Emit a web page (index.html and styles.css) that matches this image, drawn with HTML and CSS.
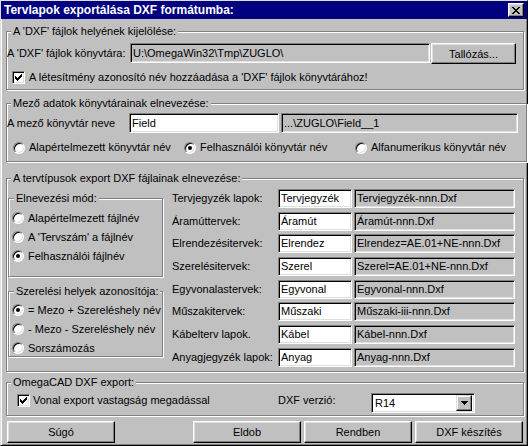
FILE: index.html
```html
<!DOCTYPE html>
<html lang="hu">
<head>
    <meta charset="UTF-8">
    <meta name="viewport" content="width=device-width, initial-scale=1.0">
    <title>Tervlapok exportálása DXF formátumba</title>
    <link rel="stylesheet" href="styles.css">
</head>
<body>

<div class="window">

    <!-- Title bar -->
    <div class="titlebar">
        <span class="title">Tervlapok exportálása DXF formátumba:</span>
        <span class="close-btn">
            <svg width="8" height="7" viewBox="0 0 8 7" shape-rendering="crispEdges"><path d="M0 0h2v1h-2zM6 0h2v1h-2zM1 1h2v1h-2zM5 1h2v1h-2zM2 2h4v1h-4zM3 3h2v1h-2zM2 4h4v1h-4zM1 5h2v1h-2zM5 5h2v1h-2zM0 6h2v1h-2zM6 6h2v1h-2z" fill="#000"/></svg>
        </span>
    </div>

    <div class="dialog">

        <!-- DXF directory -->
        <fieldset class="group dir-group">
            <legend>A 'DXF' fájlok helyének kijelölése:</legend>
            <div class="dir-body">
                <div class="row">
                    <span class="lbl row-lbl">A 'DXF' fájlok könyvtára:</span>
                    <span class="field ro dir-path">U:\OmegaWin32\Tmp\ZUGLO\</span>
                    <button class="btn browse">Tallózás...</button>
                </div>
                <div class="opt add-id">
                    <span class="check"><svg width="7" height="7" viewBox="0 0 7 7" shape-rendering="crispEdges"><path d="M6 0h1v1h-1zM5 1h2v1h-2zM0 2h1v1h-1zM4 2h3v1h-3zM0 3h2v1h-2zM3 3h3v1h-3zM0 4h5v1h-5zM1 5h3v1h-3zM2 6h1v1h-1z" fill="#000"/></svg></span>
                    A létesítmény azonosító név hozzáadása a 'DXF' fájlok könyvtárához!
                </div>
            </div>
        </fieldset>

        <!-- Field directories -->
        <fieldset class="group field-group">
            <legend>Mező adatok könyvtárainak elnevezése:</legend>
            <div class="field-body">
                <div class="row">
                    <span class="lbl row-lbl">A mező könyvtár neve</span>
                    <span class="field name-input">Field</span>
                    <span class="field ro name-preview">...\ZUGLO\Field__1</span>
                </div>
                <div class="radio-row">
                    <span class="opt"><span class="radio"></span>Alapértelmezett könyvtár név</span>
                    <span class="opt"><span class="radio on"></span>Felhasználói könyvtár név</span>
                    <span class="opt"><span class="radio"></span>Alfanumerikus könyvtár név</span>
                </div>
            </div>
        </fieldset>

        <!-- Plan type file names -->
        <fieldset class="group types-group">
            <legend>A tervtípusok export DXF fájlainak elnevezése:</legend>
            <div class="types-body">
                <div class="modes">
                    <fieldset class="group sub mode-group">
                        <legend>Elnevezési mód:</legend>
                        <div class="radio-list">
                            <span class="opt"><span class="radio"></span>Alapértelmezett fájlnév</span>
                            <span class="opt"><span class="radio"></span>A 'Tervszám' a fájlnév</span>
                            <span class="opt"><span class="radio on"></span>Felhasználói fájlnév</span>
                        </div>
                    </fieldset>
                    <fieldset class="group sub place-group">
                        <legend>Szerelési helyek azonosítója:</legend>
                        <div class="radio-list">
                            <span class="opt"><span class="radio on"></span>= Mezo + Szereléshely név</span>
                            <span class="opt"><span class="radio"></span>- Mezo - Szereléshely név</span>
                            <span class="opt"><span class="radio"></span>Sorszámozás</span>
                        </div>
                    </fieldset>
                </div>
                <div class="names">
                    <span class="lbl">Tervjegyzék lapok:</span>
                    <span class="field">Tervjegyzék</span>
                    <span class="field ro">Tervjegyzék-nnn.Dxf</span>

                    <span class="lbl">Áramúttervek:</span>
                    <span class="field">Áramút</span>
                    <span class="field ro">Áramút-nnn.Dxf</span>

                    <span class="lbl">Elrendezésitervek:</span>
                    <span class="field">Elrendez</span>
                    <span class="field ro">Elrendez=AE.01+NE-nnn.Dxf</span>

                    <span class="lbl">Szerelésitervek:</span>
                    <span class="field">Szerel</span>
                    <span class="field ro">Szerel=AE.01+NE-nnn.Dxf</span>

                    <span class="lbl">Egyvonalastervek:</span>
                    <span class="field">Egyvonal</span>
                    <span class="field ro">Egyvonal-nnn.Dxf</span>

                    <span class="lbl">Műszakitervek:</span>
                    <span class="field">Műszaki</span>
                    <span class="field ro">Műszaki-iii-nnn.Dxf</span>

                    <span class="lbl">Kábelterv lapok.</span>
                    <span class="field">Kábel</span>
                    <span class="field ro">Kábel-nnn.Dxf</span>

                    <span class="lbl">Anyagjegyzék lapok:</span>
                    <span class="field">Anyag</span>
                    <span class="field ro">Anyag-nnn.Dxf</span>
                </div>
            </div>
        </fieldset>

        <!-- OmegaCAD export -->
        <fieldset class="group omega-group">
            <legend>OmegaCAD DXF export:</legend>
            <div class="omega-body">
                <span class="opt line-width">
                    <span class="check"><svg width="7" height="7" viewBox="0 0 7 7" shape-rendering="crispEdges"><path d="M6 0h1v1h-1zM5 1h2v1h-2zM0 2h1v1h-1zM4 2h3v1h-3zM0 3h2v1h-2zM3 3h3v1h-3zM0 4h5v1h-5zM1 5h3v1h-3zM2 6h1v1h-1z" fill="#000"/></svg></span>
                    Vonal export vastagság megadással
                </span>
                <span class="lbl version-lbl">DXF verzió:</span>
                <span class="field select">
                    R14
                    <span class="drop-btn"><svg width="7" height="4" viewBox="0 0 7 4" shape-rendering="crispEdges"><path d="M0 0h7v1h-7zM1 1h5v1h-5zM2 2h3v1h-3zM3 3h1v1h-1z" fill="#000"/></svg></span>
                </span>
            </div>
        </fieldset>

        <!-- Dialog buttons -->
        <div class="buttons">
            <button class="btn help">Súgó</button>
            <button class="btn">Eldob</button>
            <button class="btn">Rendben</button>
            <button class="btn">DXF készítés</button>
        </div>

    </div>
</div>

</body>
</html>
```

FILE: styles.css
```css
* {
    box-sizing: border-box;
}
body {
    margin: 0;
    background: #c0c0c0;
    font-family: "Liberation Sans", Arial, sans-serif;
    font-size: 11px;
    color: #000;
}
.window {
    width: 528px;
    height: 446px;
    border: 1px solid;
    border-color: #dfdfdf #000 #000 #dfdfdf;
    box-shadow: inset 1px 1px #fff, inset -1px -1px #808080;
    background: #c0c0c0;
}

/* title bar */
.titlebar {
    height: 18px;
    background: #000080;
    display: flex;
    align-items: center;
    justify-content: space-between;
    padding: 0 3px 0 3px;
}
.title {
    color: #fff;
    font-weight: bold;
    font-size: 12px;
}
.close-btn {
    width: 16px;
    height: 14px;
    background: #c0c0c0;
    border: 1px solid;
    border-color: #fff #000 #000 #fff;
    box-shadow: inset -1px -1px #808080, inset 1px 1px #dfdfdf;
    display: flex;
    align-items: center;
    justify-content: center;
}

.dialog {
    padding: 6px 3px 0 5px;
}

/* group boxes */
.group {
    margin: 0;
    padding: 0;
    border: 1px solid #808080;
    box-shadow: 1px 1px 0 #fff, inset 1px 1px 0 #fff;
}
.group legend {
    margin-left: 4px;
    padding: 0 2px;
    line-height: 13px;
    background: #c0c0c0;
}
.group.sub legend {
    margin-left: 5px;
}

.row {
    display: flex;
    align-items: flex-start;
}
.lbl {
    line-height: 20px;
    white-space: nowrap;
}
.row-lbl {
    width: 123px;
}
.row .field {
    line-height: 18px;
}

/* sunken edit fields */
.field {
    display: block;
    height: 20px;
    border: 1px solid;
    border-color: #808080 #fff #fff #808080;
    box-shadow: inset 1px 1px #000, inset -1px -1px #dfdfdf;
    background: #fff;
    padding: 0 2px;
    line-height: 18px;
    white-space: nowrap;
    overflow: hidden;
}
.field.ro {
    background: #c0c0c0;
}

/* raised buttons */
.btn {
    font: inherit;
    color: #000;
    background: #c0c0c0;
    border: 1px solid;
    border-color: #fff #000 #000 #fff;
    box-shadow: inset -1px -1px #808080, inset 1px 1px #dfdfdf;
    padding: 0;
}

/* check boxes and radio buttons */
.opt {
    display: flex;
    align-items: center;
    white-space: nowrap;
    line-height: 13px;
}
.check {
    width: 13px;
    height: 13px;
    flex: none;
    background: #fff;
    border: 1px solid;
    border-color: #808080 #fff #fff #808080;
    box-shadow: inset 1px 1px #000, inset -1px -1px #dfdfdf;
    display: flex;
    align-items: center;
    justify-content: center;
    margin-right: 4px;
}
.radio {
    width: 12px;
    height: 12px;
    flex: none;
    border-radius: 50%;
    background: #fff;
    border: 1px solid;
    border-color: #808080 #fff #fff #808080;
    box-shadow: inset 1px 1px #000, inset -1px -1px #dfdfdf;
    display: flex;
    align-items: center;
    justify-content: center;
    margin-right: 4px;
}
.radio.on::after {
    content: "";
    width: 4px;
    height: 4px;
    border-radius: 50%;
    background: #000;
}

/* group 1 */
.dir-body {
    padding: 5px 0 5px 0;
}
.dir-path {
    width: 300px;
}
.browse {
    width: 85px;
    height: 21px;
    margin-left: 1px;
}
.add-id {
    margin: 7px 0 0 5px;
}

/* group 2 */
.field-group {
    margin-top: 7px;
}
.field-body {
    padding: 3px 0 8px 0;
}
.row-lbl + .name-input {
    width: 150px;
    margin-left: -1px;
}
.name-preview {
    width: 237px;
    margin-left: 2px;
}
.radio-row {
    display: grid;
    grid-template-columns: 171px 171px 171px;
    margin: 8px 0 0 6px;
    height: 12px;
    align-items: center;
}

/* group 3 */
.types-group {
    margin-top: 10px;
}
.types-body {
    display: flex;
    padding: 0 0 4px 0;
}
.modes {
    width: 155px;
    margin-left: 1px;
    padding-top: 7px;
}
.mode-group .radio-list {
    padding: 7px 0 14px 3px;
}
.place-group {
    margin-top: 8px;
}
.place-group .radio-list {
    padding: 6px 0 2px 3px;
}
.radio-list {
    display: flex;
    flex-direction: column;
    gap: 7px;
}
.radio-list .opt {
    height: 12px;
}
.names {
    margin: 4px 0 0 9px;
    display: grid;
    grid-template-columns: 106px 74px 163px;
    grid-auto-rows: 19px;
    column-gap: 0;
    row-gap: 3.7px;
}
.names .lbl {
    line-height: 19px;
}
.names .field {
    height: 19px;
    line-height: 17px;
}
.names .field.ro {
    margin-left: 2px;
}

/* group 4 */
.omega-group {
    margin-top: 4px;
}
.omega-body {
    display: flex;
    align-items: flex-start;
    padding: 0 0 2px 0;
}
.line-width {
    width: 261px;
    margin: 5px 0 0 10px;
    height: 13px;
}
.line-width .check {
    margin-right: 3px;
}
.version-lbl {
    width: 93px;
    margin-top: 5px;
    line-height: 13px;
}
.select {
    width: 104px;
    margin-top: 4px;
    display: flex;
    align-items: center;
    justify-content: space-between;
    padding: 0 2px 0 3px;
}
.drop-btn {
    width: 16px;
    height: 16px;
    background: #c0c0c0;
    border: 1px solid;
    border-color: #dfdfdf #000 #000 #dfdfdf;
    box-shadow: inset -1px -1px #808080, inset 1px 1px #fff;
    display: flex;
    align-items: center;
    justify-content: center;
}

/* bottom buttons */
.buttons {
    display: flex;
    gap: 3px;
    margin-top: 5px;
    padding: 0 1px;
}
.buttons .btn {
    width: 108px;
    height: 22px;
}
.buttons .help {
    margin-right: auto;
}
```
